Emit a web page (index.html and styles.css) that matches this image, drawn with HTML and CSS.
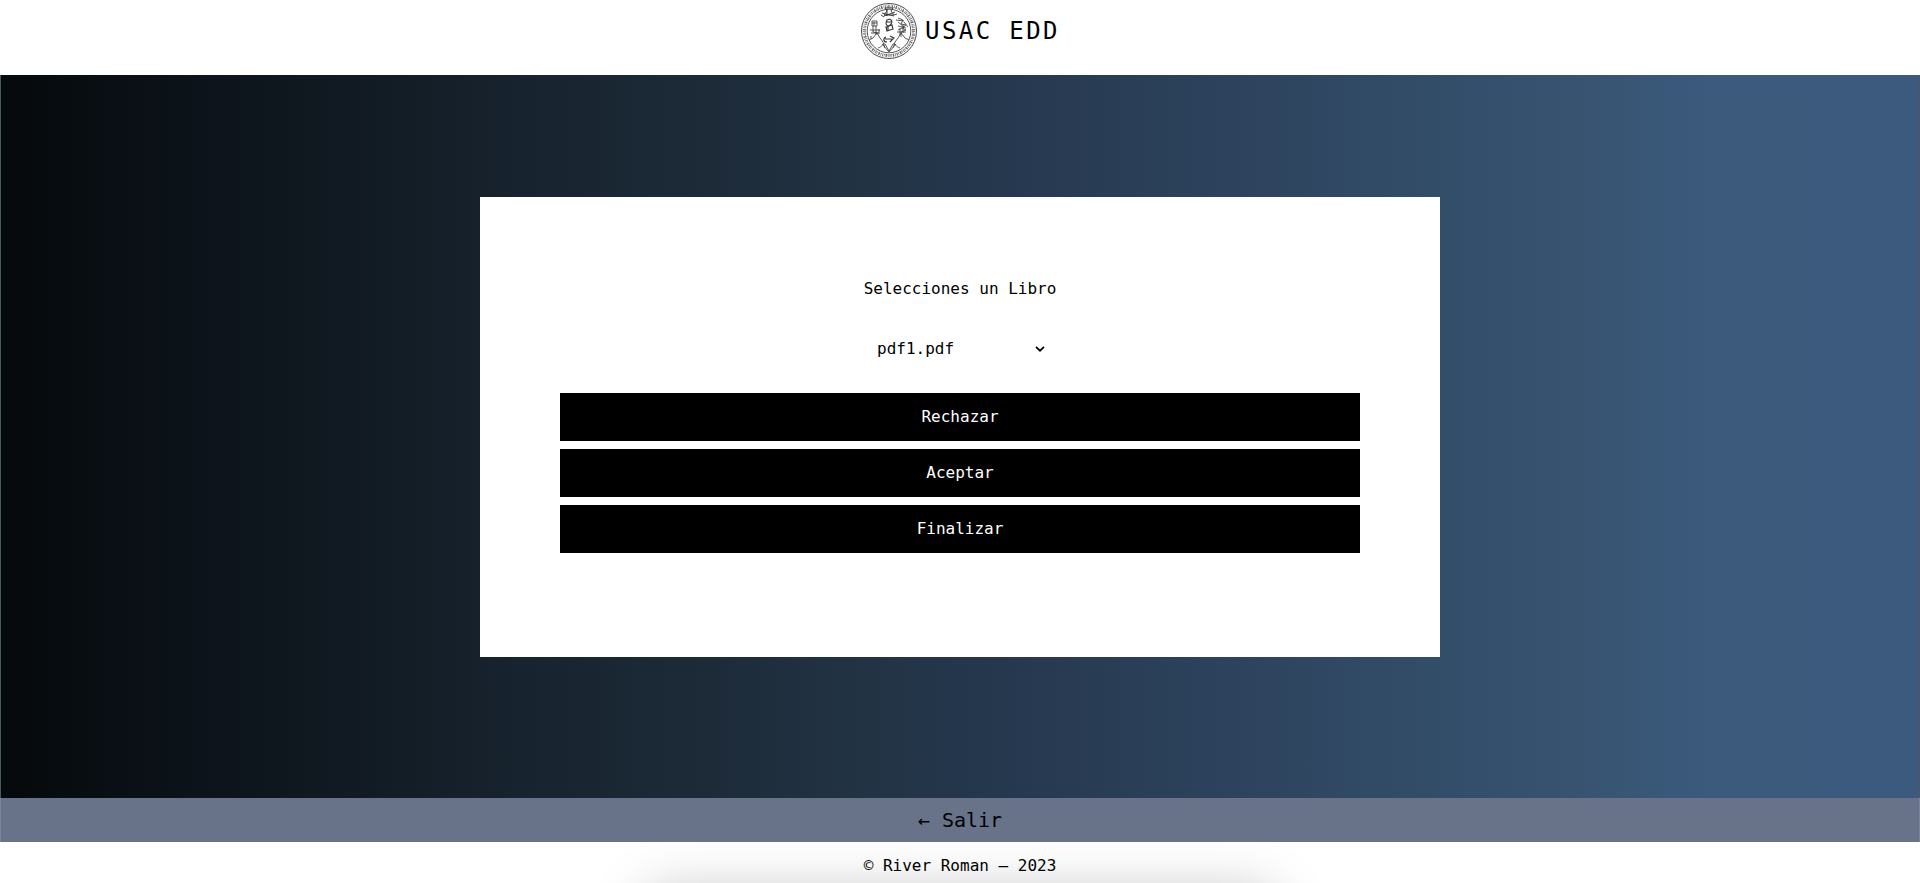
FILE: index.html
```html
<!DOCTYPE html>
<html lang="es">
<head>
<meta charset="utf-8">
<title>USAC EDD</title>
<link rel="stylesheet" href="styles.css">
</head>
<body>
<header class="header">
  <svg class="seal" viewBox="0 0 58 58" fill="none" stroke="#444">
    <circle cx="29" cy="29" r="27.5" stroke="#333" stroke-width=".9"/>
    <circle cx="29" cy="29" r="21.8" stroke-width=".9"/>
    <circle cx="29" cy="29" r="24.6" stroke="#666" stroke-width="3.2" stroke-dasharray=".8 1.1 .6 1 1.3 1.3 .5 .8"/>
    <circle cx="29" cy="29" r="24" stroke="#777" stroke-width=".8" stroke-dasharray="2 1.6 1.2 1"/>
    <g stroke-width=".9">
      <path d="M9 38l4-2 4-5 3 5 3 4 2 6M49 38l-4-2-4-5-3 5-3 4-2 6M18 46c4-1 5-5 7-4l4 7 4-7c2-1 3 3 7 4M22 42l7 8 7-8"/>
      <path d="M25 6h8l-2 3 3 4h-10l3-4zM22 11l12 3M24 14l11-4M21 13l3 2M34 13l3-1M27 7v7" stroke="#333"/>
      <path d="M27 18c4-2 6 1 4 4s-5 2-5-1zM26 25l6-2 1 4-6 2zM27 20h4M28 24v4M26 35c-3 1-3 5 1 5M30 34l4 2-4 4M25 37h8" stroke="#333" stroke-width="1.1"/>
      <path d="M12 19h5v5h-5zM12 21h5M13 24v6l5 1M16 24v9M10 28h10M11 31h8M11 34v3M19 27v5M14 20v4" stroke="#444"/>
      <path d="M38 16l5 2-2 4 5 1-4 3 4 2-5 2v5M38 20l6 5-6 3M36 18l8 1M40 26v7M44 20l4 5M37 30h9M43 23v8M38 24l8 2" stroke="#444"/>
    </g>
  </svg>
  <span class="brand">USAC EDD</span>
</header>
<main class="main">
  <section class="card">
    <label class="label" for="book">Selecciones un Libro</label>
    <div class="picker" id="book">
      <span>pdf1.pdf</span>
      <svg class="chevron" viewBox="0 0 10 6" fill="none" stroke="#000" stroke-width="1.7"><path d="M1 .8l4 3.9L9 .8"/></svg>
    </div>
    <div class="actions">
      <button class="button">Rechazar</button>
      <button class="button">Aceptar</button>
      <button class="button">Finalizar</button>
    </div>
  </section>
</main>
<a class="exit">← Salir</a>
<footer class="footer"><span class="copyright">© River Roman – 2023</span></footer>
</body>
</html>
```
FILE: styles.css
```css
* {
  box-sizing: border-box;
}
body {
  margin: 0;
  height: 883px;
  overflow: hidden;
  display: flex;
  flex-direction: column;
  background: #fff;
  color: #000;
  font: 16px/24px "DejaVu Sans Mono", monospace;
}
.header {
  height: 75px;
  flex: none;
  display: flex;
  justify-content: center;
  align-items: flex-start;
  gap: 7px;
  padding-top: 2px;
}
.seal {
  width: 58px;
  height: 58px;
}
.brand {
  font-size: 24px;
  line-height: 58px;
  letter-spacing: 2.4px;
}
.main {
  height: 723px;
  flex: none;
  padding-top: 122px;
  border: solid #4a5a62;
  border-width: 0 1px;
  background: linear-gradient(90deg, #05090b 0%, #0a1016 7%, #111a22 18%, #17232e 27%, #1d2b39 37%, #223344 45%, #25374d 51%, #2e445f 66%, #314b66 72%, #375370 82%, #3b5a7c 89%, #3c5a7d 100%);
}
.card {
  width: 960px;
  height: 460px;
  margin: 0 auto;
  padding: 80px;
  background: #fff;
  display: flex;
  flex-direction: column;
  align-items: center;
}
.label {
  line-height: 23px;
}
.picker {
  width: 170px;
  height: 48px;
  margin-top: 25px;
  padding-left: 2px;
  display: flex;
  align-items: center;
  justify-content: space-between;
}
.chevron {
  width: 10px;
  height: 6px;
}
.actions {
  width: 800px;
  margin-top: 20px;
  display: grid;
  gap: 8px;
}
.button {
  height: 48px;
  border: 0;
  padding: 0;
  background: #000;
  color: #fff;
  font: inherit;
}
.exit {
  height: 44px;
  flex: none;
  border: solid #7c8795;
  border-width: 0 1px;
  background: #68738a;
  font-size: 20px;
  line-height: 44px;
  text-align: center;
}
.footer {
  position: relative;
  height: 41px;
  overflow: hidden;
  text-align: center;
  line-height: 47px;
}
.footer::before {
  content: "";
  position: absolute;
  left: 645px;
  top: 51px;
  width: 630px;
  height: 80px;
  border-radius: 20px;
  box-shadow: 0 0 54px 2px rgba(0, 0, 0, .23);
}
.copyright {
  position: relative;
}
```
